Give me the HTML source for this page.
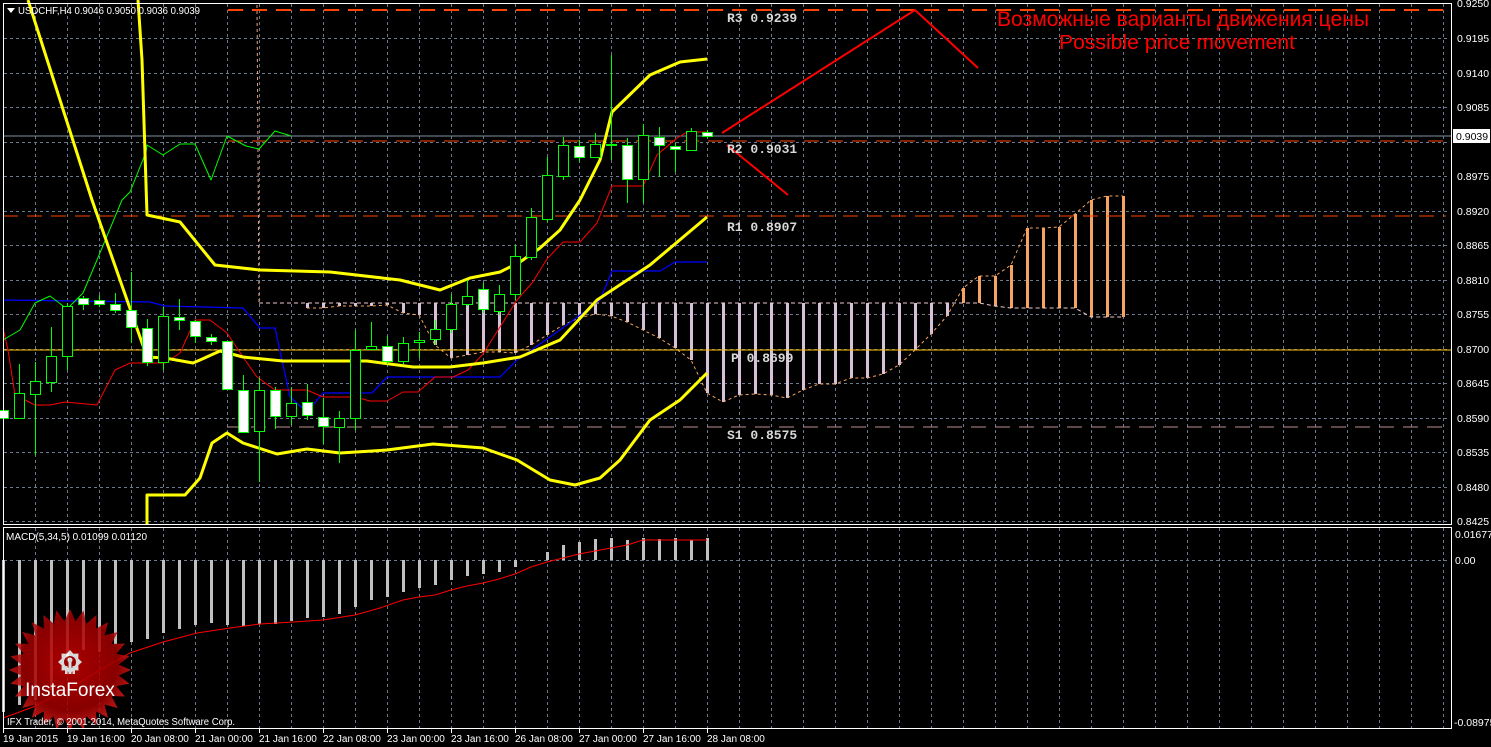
<!DOCTYPE html>
<html><head><meta charset="utf-8">
<style>
html,body{margin:0;padding:0;background:#000;width:1491px;height:747px;overflow:hidden}
svg{display:block}
text{font-family:"Liberation Sans",sans-serif}
text.mono{font-family:"Liberation Mono",monospace;font-weight:bold;font-size:13px;fill:#d8d8d8}
</style></head>
<body>
<svg id="s" width="1491" height="747" xmlns="http://www.w3.org/2000/svg">
<rect width="1491" height="747" fill="#000"/>
<g id="grid"></g>
<g id="cloud"></g>
<line x1="228" y1="10" x2="1446" y2="10" stroke="#ff4500" stroke-width="2" stroke-dasharray="15,9"/>
<line x1="3" y1="136" x2="1451" y2="136" stroke="#8090a0" stroke-width="1"/>
<line x1="228" y1="141" x2="1446" y2="141" stroke="#ff4500" stroke-width="1" stroke-dasharray="15,9"/>
<line x1="3" y1="216" x2="1446" y2="216" stroke="#ff4500" stroke-width="1" stroke-dasharray="15,9"/>
<line x1="3" y1="350" x2="1451" y2="350" stroke="#ffc000" stroke-width="1"/>
<line x1="227" y1="427" x2="1446" y2="427" stroke="#bc8f8f" stroke-width="1" stroke-dasharray="15,9"/>
<line x1="257" y1="5" x2="259" y2="303" stroke="#f4a080" stroke-width="1" stroke-dasharray="3,3"/>
<g id="lines"></g>
<g id="candles"></g>
<g id="macd"></g>
<g id="logo" opacity="0.85"></g>
<polyline points="722,133 915,10 978,68" fill="none" stroke="#ff0000" stroke-width="2"/>
<line x1="727" y1="145" x2="788" y2="195" stroke="#ff0000" stroke-width="2"/>
<rect x="3.5" y="3.5" width="1448" height="521" fill="none" stroke="#fff" stroke-width="1"/>
<rect x="3.5" y="527.5" width="1448" height="201" fill="none" stroke="#fff" stroke-width="1"/>
<text class="mono" x="727" y="22">R3  0.9239</text>
<text class="mono" x="727" y="153">R2  0.9031</text>
<text class="mono" x="727" y="231">R1  0.8907</text>
<text class="mono" x="731" y="362">P  0.8699</text>
<text class="mono" x="727" y="439">S1  0.8575</text>
<text x="1183" y="26" font-size="21" fill="#ff0000" text-anchor="middle" textLength="372" lengthAdjust="spacingAndGlyphs">Возможные варианты движения цены</text>
<text x="1177" y="49" font-size="20" fill="#ff0000" text-anchor="middle" textLength="236" lengthAdjust="spacingAndGlyphs">Possible price movement</text>
<path d="M7,8 L15,8 L11,13 Z" fill="#fff"/>
<text x="18" y="14" font-size="10" fill="#fff" textLength="182" lengthAdjust="spacingAndGlyphs">USDCHF,H4  0.9046 0.9050 0.9036 0.9039</text>
<text x="6" y="540" font-size="10" fill="#fff">MACD(5,34,5) 0.01099 0.01120</text>
<text x="7" y="725" font-size="10.5" fill="#fff" textLength="228" lengthAdjust="spacingAndGlyphs">IFX Trader, © 2001-2014, MetaQuotes Software Corp.</text>
<g font-size="10.5" fill="#fff">
<text x="1457" y="7">0.9250</text>
<text x="1457" y="42">0.9195</text>
<text x="1457" y="77">0.9140</text>
<text x="1457" y="111">0.9085</text>
<text x="1457" y="180">0.8975</text>
<text x="1457" y="215">0.8920</text>
<text x="1457" y="249">0.8865</text>
<text x="1457" y="284">0.8810</text>
<text x="1457" y="318">0.8755</text>
<text x="1457" y="353">0.8700</text>
<text x="1457" y="387">0.8645</text>
<text x="1457" y="422">0.8590</text>
<text x="1457" y="456">0.8535</text>
<text x="1457" y="491">0.8480</text>
<text x="1457" y="525">0.8425</text>
<text x="1455" y="538">0.01677</text>
<text x="1455" y="564">0.00</text>
<text x="1454" y="726">-0.08975</text>
</g>
<rect x="1453" y="129" width="37" height="14" fill="#fff"/>
<text x="1456" y="140" font-size="10.5" fill="#000">0.9039</text>
<g font-size="10" fill="#fff">
<text x="3" y="742">19 Jan 2015</text>
<text x="67" y="742">19 Jan 16:00</text>
<text x="131" y="742">20 Jan 08:00</text>
<text x="195" y="742">21 Jan 00:00</text>
<text x="259" y="742">21 Jan 16:00</text>
<text x="323" y="742">22 Jan 08:00</text>
<text x="387" y="742">23 Jan 00:00</text>
<text x="451" y="742">23 Jan 16:00</text>
<text x="515" y="742">26 Jan 08:00</text>
<text x="579" y="742">27 Jan 00:00</text>
<text x="643" y="742">27 Jan 16:00</text>
<text x="707" y="742">28 Jan 08:00</text>
</g>
<text x="70" y="696" font-size="19" fill="#fff" text-anchor="middle">InstaForex</text>
<g id="ticks"></g>
</svg>
<script>
var NS="http://www.w3.org/2000/svg";
function el(p,t,a){var e=document.createElementNS(NS,t);for(var k in a)e.setAttribute(k,a[k]);document.getElementById(p).appendChild(e);return e;}
var hy=[38,73,107,142,176,211,245,280,314,349,383,418,452,487,521];
hy.forEach(function(y){el("grid","line",{x1:4,y1:y+.5,x2:1450,y2:y+.5,stroke:"#6a7a8c","stroke-dasharray":"3,3"});});
el("grid","line",{x1:4,y1:560.5,x2:1450,y2:560.5,stroke:"#6a7a8c","stroke-dasharray":"3,3"});
for(var x=35;x<1450;x+=32){
 el("grid","line",{x1:x+.5,y1:4,x2:x+.5,y2:524,stroke:"#6a7a8c","stroke-dasharray":"3,3"});
 el("grid","line",{x1:x+.5,y1:528,x2:x+.5,y2:728,stroke:"#6a7a8c","stroke-dasharray":"3,3"});
}
for(var x=3;x<=707;x+=64){el("ticks","line",{x1:x+.5,y1:729,x2:x+.5,y2:733,stroke:"#fff"});}
var spanA={691:360,707:393,723:402,739:395,755:394,771:395,787:398,803:390,819:384,835:384,851:378,867:378,883:374,899:365,915:350,931:334,947:316,963:288,979:276,995:276,1011:265,1027:228,1043:228,1059:227,1075:214,1091:200,1107:196,1123:196};
var pre={307:308,323:308,339:306,355:306,371:306,387:305,403:313,419:315,435:345,451:358,467:355,483:352,499:352,515:353,531:345,547:335,563:325,579:318,595:314,611:316,627:322,643:330,659:338,675:348};
for(var k in pre)spanA[k]=pre[k];
var spanB={963:303,979:303,995:306,1011:308,1027:308,1043:308,1059:308,1075:308,1091:317,1107:317,1123:317};
var ka=Object.keys(spanA).map(Number).sort(function(a,b){return a-b});
var pa=[],pb=[];
ka.forEach(function(x){var b=spanB[x]||303;var a=spanA[x];
 el("cloud","line",{x1:x+.5,y1:Math.min(a,b),x2:x+.5,y2:Math.max(a,b),stroke:x<963?"#d8c0d8":"#f4a460","stroke-width":3});
 pa.push(x+","+a);pb.push(x+","+b);});
el("cloud","polyline",{points:pa.join(" "),fill:"none",stroke:"#f4a460","stroke-dasharray":"3,3"});
el("cloud","polyline",{points:"259,303 "+pb.join(" "),fill:"none",stroke:"#f0c8d0","stroke-dasharray":"4,3"});
function pl(pts,c,w){el("lines","polyline",{points:pts,fill:"none",stroke:c,"stroke-width":w,"stroke-linejoin":"round"});}
pl("3,300 150,302 165,306 243,308 260,328 275,328 290,397 307,412 323,393 372,393 387,377 500,377 517,360 560,330 600,300 612,271 660,271 675,262 707,262","#0000ff",1.3);
pl("3,328 8,350 15,395 35,405 50,405 65,402 97,405 115,370 130,363 165,363 180,353 195,320 210,320 227,333 243,357 257,377 275,390 307,390 323,397 355,397 370,401 387,401 403,392 418,392 435,377 453,377 468,370 483,354 500,327 517,300 532,283 547,259 563,242 580,242 597,223 612,186 643,186 657,155 677,138 687,132 707,132","#ff0000",1);
pl("3,340 20,330 35,303 50,296 67,309 83,293 97,260 122,200 130,192 146,152 147,145 163,155 180,144 195,144 211,180 227,136 246,146 259,149 275,131 291,136","#00ff00",1);
pl("28,0 92,200 120,280 147,357 165,358 193,363 200,360 220,351 243,357 283,361 367,361 413,367 450,367 483,363 520,357 560,340 597,300 650,265 707,217","#ffff00",3);
pl("138,0 142,60 147,215 180,222 215,265 260,270 330,272 400,280 440,290 470,278 500,272 520,262 540,248 560,230 580,200 600,160 612,112 650,75 680,62 707,59","#ffff00",3);
pl("147,525 147,495 185,495 200,478 212,443 227,433 243,443 277,454 307,449 340,453 387,450 433,444 483,448 517,460 550,480 575,485 600,478 620,460 650,420 680,400 707,373","#ffff00",3);
var C=[[0,0,410,418,405,420],[1,1,393,418,364,418],[2,1,381,394,362,455],[3,1,356,382,327,392],[4,1,306,356,303,370],[5,0,298,304,296,310],[6,0,300,304,295,307],[7,0,304,310,293,313],[8,0,310,327,272,343],[9,0,328,362,319,366],[10,1,316,362,307,370],[11,0,317,320,299,330],[12,0,321,336,320,343],[13,0,337,341,334,345],[14,0,341,389,341,389],[15,0,390,432,375,433],[16,1,390,431,378,482],[17,0,390,416,387,429],[18,1,403,416,387,425],[19,0,402,415,384,420],[20,0,417,426,398,444],[21,1,418,427,411,463],[22,1,350,418,330,430],[23,1,346,349,322,350],[24,0,346,361,336,364],[25,1,343,361,337,364],[26,1,340,342,332,358],[27,1,329,339,320,345],[28,1,304,329,294,333],[29,1,296,304,280,306],[30,0,289,309,283,313],[31,1,294,311,285,315],[32,1,256,294,245,300],[33,1,217,257,208,260],[34,1,175,219,157,222],[35,1,145,176,137,180],[36,0,146,157,140,162],[37,1,144,157,133,158],[38,1,144,145,55,160],[39,0,145,179,138,203],[40,1,135,179,124,203],[41,0,137,145,127,177],[42,0,146,149,143,172],[43,1,131,150,128,150],[44,0,132,136,130,138]];
C.forEach(function(c){var x=3+16*c[0];
 el("candles","line",{x1:x+.5,y1:c[4],x2:x+.5,y2:c[5],stroke:"#00ff00"});
 el("candles","rect",{x:x-4.5,y:c[2]+.5,width:10,height:Math.max(c[3]-c[2],1),fill:c[1]?"#000":"#fff",stroke:"#00ff00"});});
var M=[712,705,700,690,660,650,652,644,642,639,633,629,625,623,625,626,624,624,621,618,617,614,607,600,597,592,588,585,580,576,574,572,567,561,552,545,542,539,538,540,538,539,538,540,538];
M.forEach(function(v,i){var x=3+16*i;var a=Math.min(v,560),b=Math.max(v,560);if(b-a<1)b=a+1;
 el("macd","rect",{x:x-1,y:a,width:3,height:b-a,fill:"#c0c0c0"});});
el("macd","polyline",{points:"3,718 33,707 67,690 100,670 130,653 163,642 197,633 230,628 260,624 293,622 323,620 355,615 380,608 403,600 419,597 435,595 451,590 467,586 483,583 499,579 515,574 531,567 547,562 563,558 579,554 595,551 611,548 627,545 643,540 707,540",fill:"none",stroke:"#ff0000","stroke-width":1});
var defs=document.createElementNS(NS,"defs");defs.innerHTML='<radialGradient id="rg" cx="50%" cy="45%" r="55%"><stop offset="0" stop-color="#c80000"/><stop offset="0.7" stop-color="#a00000"/><stop offset="1" stop-color="#e02020"/></radialGradient>';
document.getElementById("s").insertBefore(defs,document.getElementById("s").firstChild);
var pts=[],n=28,cx=70,cy=670;
for(var i=0;i<2*n;i++){var r=i%2?49:61;var a=Math.PI*i/n;pts.push((cx+r*Math.sin(a)).toFixed(1)+","+(cy-r*Math.cos(a)).toFixed(1));}
el("logo","polygon",{points:pts.join(" "),fill:"url(#rg)"});
var gp=[],gx=70,gy=662;
for(var i=0;i<16;i++){var r=(i%2?9:12);var a=Math.PI*i/8;gp.push((gx+r*Math.sin(a)).toFixed(1)+","+(gy-r*Math.cos(a)).toFixed(1));}
el("logo","polygon",{points:gp.join(" "),fill:"#fff"});
el("logo","circle",{cx:gx,cy:gy,r:6,fill:"#b00000"});
el("logo","circle",{cx:gx,cy:gy-2,r:2.5,fill:"#fff"});
el("logo","rect",{x:gx-1.5,y:gy,width:3,height:12,fill:"#fff"});
el("logo","rect",{x:gx-5,y:gy+4,width:2.5,height:8,fill:"#fff"});
el("logo","rect",{x:gx+2.5,y:gy+4,width:2.5,height:8,fill:"#fff"});
</script>
</body></html>
